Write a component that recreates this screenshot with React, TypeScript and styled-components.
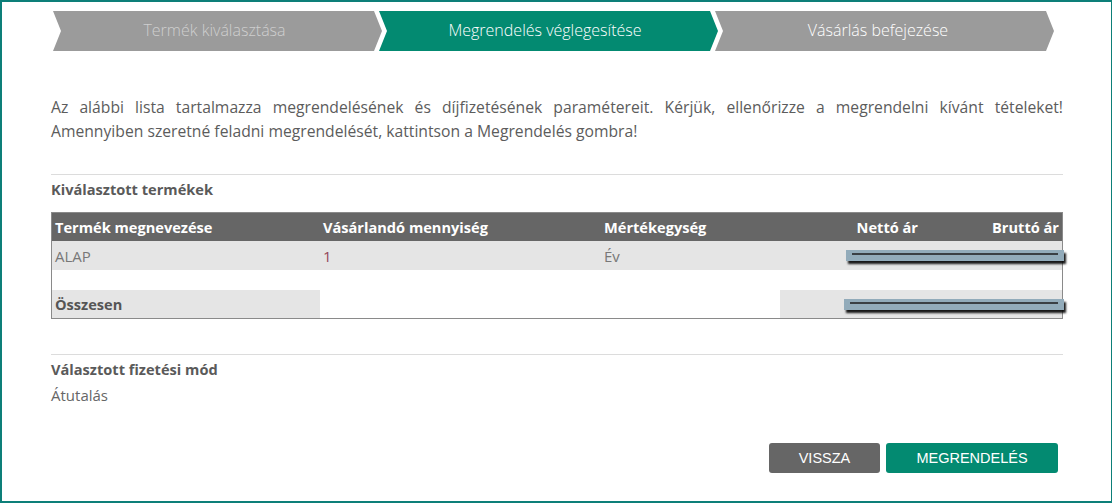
import React from 'react';
import styled, { createGlobalStyle } from 'styled-components';

const GlobalStyle = createGlobalStyle`
  html, body {
    margin: 0;
    padding: 0;
    background: #fff;
  }
  body {
    font-family: "Open Sans", "Noto Sans", sans-serif;
    color: #5a5a5a;
  }
`;

const Frame = styled.div`
  box-sizing: border-box;
  width: 1112px;
  height: 503px;
  border: 2px solid #0d7f79;
  border-right-width: 1px;
  padding: 9px 48px 0 49px;
`;

const Stepper = styled.div`
  display: flex;
  height: 40px;
  padding-left: 2px;
`;

const Step = styled.div<{ $active?: boolean; $done?: boolean; $first?: boolean; $shift: number }>`
  flex: 0 0 ${(p) => (p.$first ? '329px' : '339px')};
  margin-left: ${(p) => (p.$first ? '0' : '-3px')};
  display: flex;
  align-items: center;
  justify-content: center;
  background: ${(p) => (p.$active ? '#038a71' : '#9b9b9b')};
  color: ${(p) => (p.$done ? '#cfcfcf' : '#fff')};
  font-size: 16px;
  font-weight: 300;
  clip-path: polygon(0 0, calc(100% - 8px) 0, 100% 50%, calc(100% - 8px) 100%, 0 100%, 8px 50%);
  padding: 0 ${(p) => p.$shift}px 2px 0;
  box-sizing: border-box;
`;

const Intro = styled.p`
  margin: 44px 0 0;
  font-size: 15.7px;
  line-height: 24px;
  text-align: justify;
  color: #5c5c5c;
`;

const Divider = styled.hr`
  border: none;
  border-top: 1px solid #dcdcdc;
  margin: 0;
`;

const Section = styled.section<{ $top: number }>`
  margin-top: ${(p) => p.$top}px;
`;

const SectionTitle = styled.h3`
  margin: 4px 0 0;
  font-size: 14.6px;
  font-weight: 700;
  line-height: 20px;
  color: #5a5a5a;
`;

const Table = styled.div`
  margin-top: 13px;
  border: 1px solid #8a8a8a;
  display: grid;
  grid-template-columns: 268px 281px 179px 1fr 1fr;
`;

const Cell = styled.div<{
  $head?: boolean;
  $shade?: boolean;
  $right?: boolean;
  $bold?: boolean;
  $accent?: boolean;
  $h?: number;
}>`
  height: ${(p) => p.$h ?? 28}px;
  display: flex;
  align-items: center;
  justify-content: ${(p) => (p.$right ? 'flex-end' : 'flex-start')};
  padding: 0 3px;
  font-size: ${(p) => (p.$head || p.$bold ? '14.6px' : '15px')};
  font-weight: ${(p) => (p.$head || p.$bold ? 700 : 400)};
  background: ${(p) => (p.$head ? '#666' : p.$shade ? '#e5e5e5' : '#fff')};
  color: ${(p) => (p.$head ? '#fff' : p.$accent ? '#94475a' : p.$bold ? '#555' : '#777')};
  white-space: nowrap;
`;

const PriceCell = styled.div<{ $shade?: boolean; $h?: number }>`
  grid-column: span 2;
  height: ${(p) => p.$h ?? 28}px;
  background: ${(p) => (p.$shade ? '#e5e5e5' : '#fff')};
  display: flex;
  align-items: center;
  justify-content: flex-end;
`;

const Redacted = styled.span<{ $w: number }>`
  position: relative;
  display: block;
  flex: 0 0 auto;
  width: ${(p) => p.$w}px;
  height: 11px;
  margin: 0 -2px 0 0;
  background: #92abba;
  box-shadow: 2px 3px 2px rgba(0, 0, 0, 0.9);
  &::after {
    content: '';
    position: absolute;
    left: 6px;
    right: 6px;
    top: 3px;
    height: 2px;
    background: #3a3f44;
  }
`;

const Value = styled.div`
  margin-top: 6px;
  font-size: 15px;
  line-height: 20px;
  color: #666;
`;

const Actions = styled.div`
  display: flex;
  justify-content: flex-end;
  gap: 6px;
  margin-top: 38px;
  padding-right: 5px;
`;

const Button = styled.button<{ $primary?: boolean }>`
  height: 30px;
  width: ${(p) => (p.$primary ? '172px' : '111px')};
  border: none;
  border-radius: 3px;
  background: ${(p) => (p.$primary ? '#038a71' : '#666')};
  color: #fff;
  font-family: "Liberation Sans", Arial, sans-serif;
  font-size: 14.5px;
  text-transform: uppercase;
  cursor: pointer;
`;

export default function App() {
  return (
    <>
      <GlobalStyle />
      <Frame>
        <Stepper>
          <Step $first $done $shift={6}>Termék kiválasztása</Step>
          <Step $active $shift={7}>Megrendelés véglegesítése</Step>
          <Step $shift={13}>Vásárlás befejezése</Step>
        </Stepper>

        <Intro>
          Az alábbi lista tartalmazza megrendelésének és díjfizetésének paramétereit. Kérjük, ellenőrizze a
          megrendelni kívánt tételeket! Amennyiben szeretné feladni megrendelését, kattintson a Megrendelés gombra!
        </Intro>

        <Section $top={31}>
          <Divider />
          <SectionTitle>Kiválasztott termékek</SectionTitle>
          <Table>
            <Cell $head>Termék megnevezése</Cell>
            <Cell $head>Vásárlandó mennyiség</Cell>
            <Cell $head>Mértékegység</Cell>
            <Cell $head $right>Nettó ár</Cell>
            <Cell $head $right>Bruttó ár</Cell>

            <Cell $shade $h={29}>ALAP</Cell>
            <Cell $shade $accent $h={29}>1</Cell>
            <Cell $shade $h={29}>Év</Cell>
            <PriceCell $shade $h={29}>
              <Redacted $w={218} />
            </PriceCell>

            <Cell $h={20} />
            <Cell $h={20} />
            <Cell $h={20} />
            <PriceCell $h={20} />

            <Cell $shade $bold>Összesen</Cell>
            <Cell />
            <Cell />
            <PriceCell $shade>
              <Redacted $w={220} />
            </PriceCell>
          </Table>
        </Section>

        <Section $top={35}>
          <Divider />
          <SectionTitle>Választott fizetési mód</SectionTitle>
          <Value>Átutalás</Value>
        </Section>

        <Actions>
          <Button>Vissza</Button>
          <Button $primary>Megrendelés</Button>
        </Actions>
      </Frame>
    </>
  );
}
